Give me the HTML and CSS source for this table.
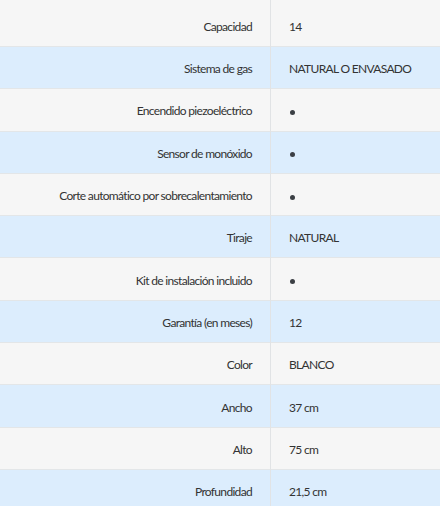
FILE: index.html
```html
<!DOCTYPE html>
<html lang="es">
<head>
<meta charset="utf-8">
<link rel="stylesheet" href="styles.css">
</head>
<body>
<table class="specs">
  <tbody>
    <tr class="first"><th>Capacidad</th><td>14</td></tr>
    <tr><th>Sistema de gas</th><td>NATURAL O ENVASADO</td></tr>
    <tr><th>Encendido piezoeléctrico</th><td><span class="dot"></span></td></tr>
    <tr><th>Sensor de monóxido</th><td><span class="dot"></span></td></tr>
    <tr><th>Corte automático por sobrecalentamiento</th><td><span class="dot"></span></td></tr>
    <tr><th>Tiraje</th><td>NATURAL</td></tr>
    <tr><th>Kit de instalación incluido</th><td><span class="dot"></span></td></tr>
    <tr><th>Garantía (en meses)</th><td>12</td></tr>
    <tr><th>Color</th><td>BLANCO</td></tr>
    <tr><th>Ancho</th><td>37 cm</td></tr>
    <tr><th>Alto</th><td>75 cm</td></tr>
    <tr><th>Profundidad</th><td>21,5 cm</td></tr>
  </tbody>
</table>
</body>
</html>
```
FILE: styles.css
```css
html, body {
  margin: 0;
  padding: 0;
  background: #ffffff;
}
body {
  font-family: Lato, "Open Sans", sans-serif;
  font-size: 12px;
  letter-spacing: -0.68px;
  color: #333333;
  overflow: hidden;
}
.specs {
  width: 440px;
  border-collapse: collapse;
  table-layout: fixed;
}
.specs tr {
  height: 42.3px;
}
.specs tr.first {
  height: 46.5px;
}
.specs tr:nth-child(odd) {
  background: #f6f6f6;
}
.specs tr:nth-child(even) {
  background: #dcedfd;
}
.specs th,
.specs td {
  padding: 3px 18px 0;
  border-top: 1px solid #e3e6e8;
  font-weight: 400;
  line-height: 16px;
  vertical-align: middle;
  white-space: nowrap;
}
.specs tr.first th,
.specs tr.first td {
  border-top: 0;
  padding-top: 8px;
}
.specs th {
  width: 234px;
  text-align: right;
  border-right: 1px solid #e1e3e5;
}
.specs td {
  text-align: left;
}
.dot {
  display: inline-block;
  width: 5px;
  height: 5px;
  border-radius: 50%;
  background: #3b3f44;
  margin-left: 1px;
  vertical-align: middle;
}
```
